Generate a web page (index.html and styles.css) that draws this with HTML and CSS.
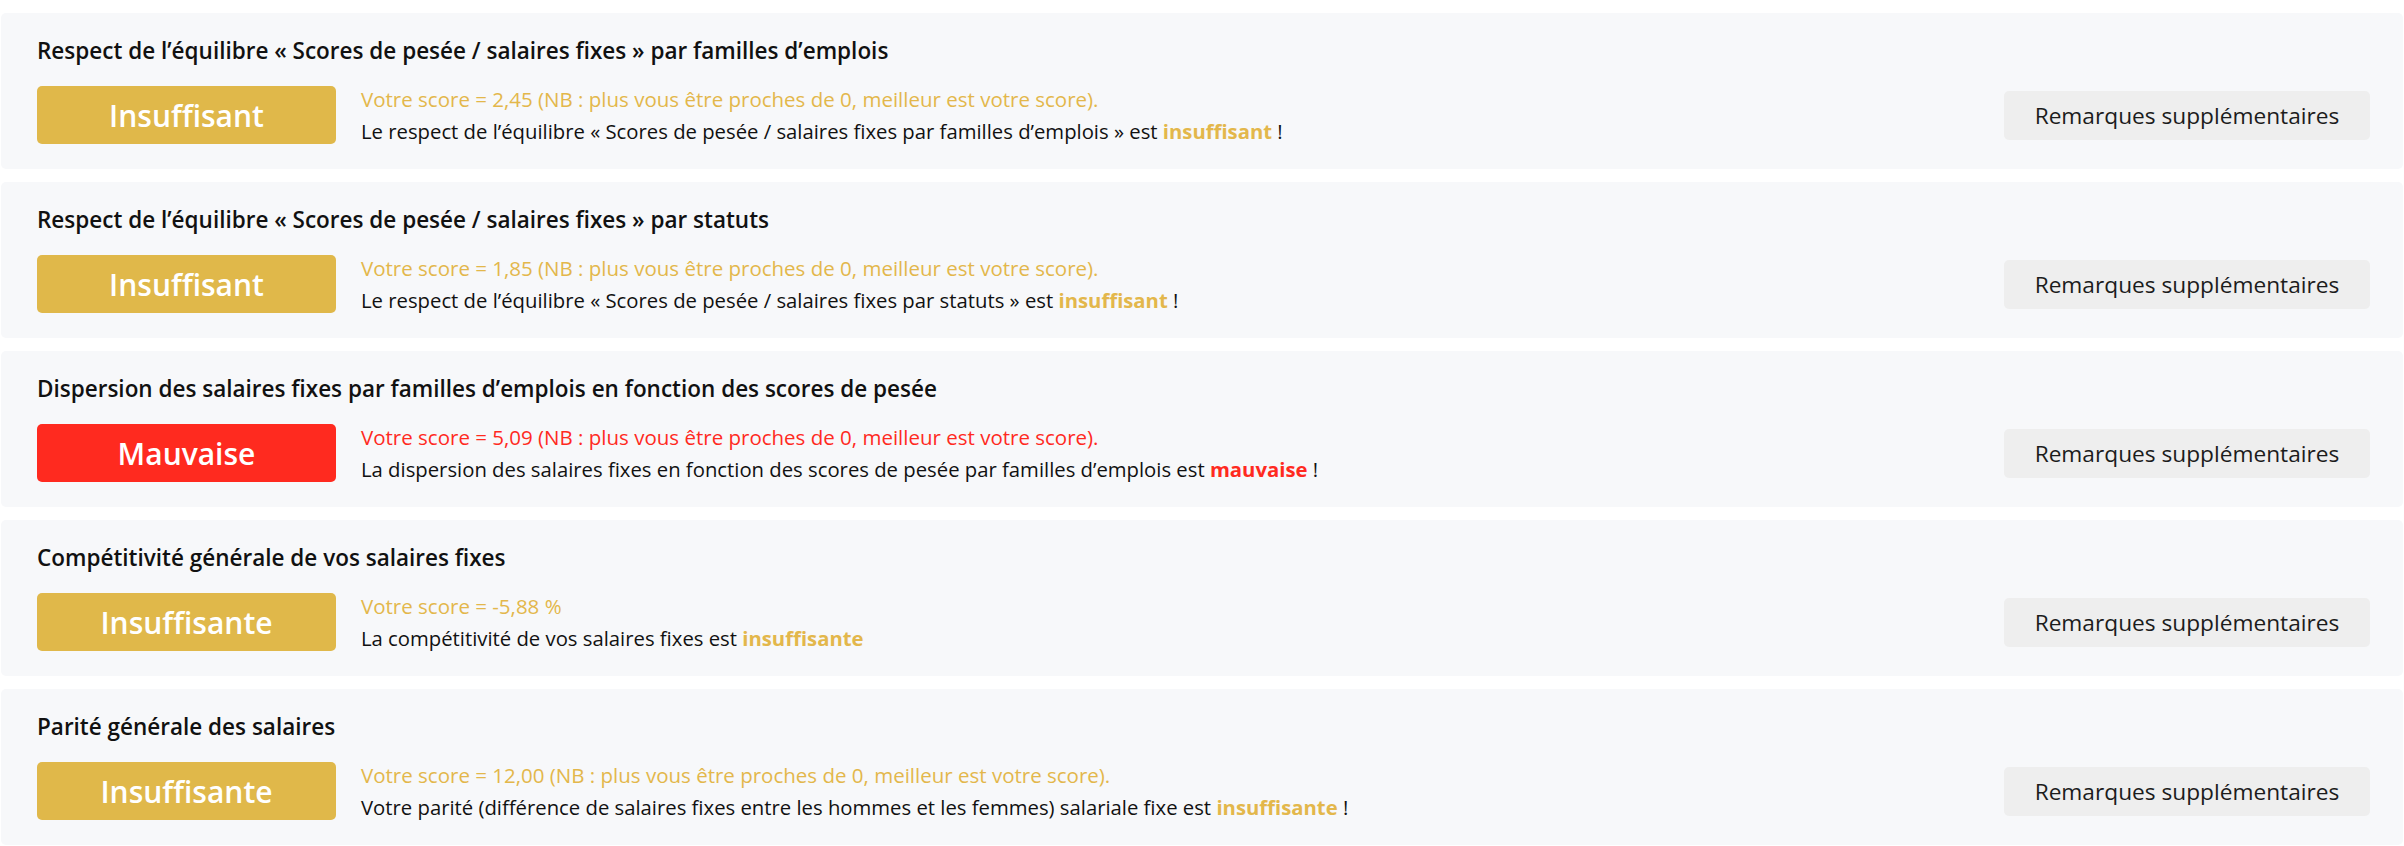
FILE: index.html
```html
<!DOCTYPE html>
<html lang="fr">
<head>
    <meta charset="UTF-8">
    <meta name="viewport" content="width=device-width, initial-scale=1.0">
    <title>Résultats</title>
    <link rel="stylesheet" href="styles.css">
</head>
<body>
    <div class="results">
        <div class="card">
            <div class="card-title">Respect de l’équilibre « Scores de pesée / salaires fixes » par familles d’emplois</div>
            <div class="card-row">
                <div class="badge warn">Insuffisant</div>
                <div class="details">
                    <div class="score warn-text">Votre score = 2,45 (NB : plus vous être proches de 0, meilleur est votre score).</div>
                    <div class="desc">Le respect de l’équilibre « Scores de pesée / salaires fixes par familles d’emplois » est <b class="warn-text">insuffisant</b> !</div>
                </div>
                <button class="remarks">Remarques supplémentaires</button>
            </div>
        </div>

        <div class="card">
            <div class="card-title">Respect de l’équilibre « Scores de pesée / salaires fixes » par statuts</div>
            <div class="card-row">
                <div class="badge warn">Insuffisant</div>
                <div class="details">
                    <div class="score warn-text">Votre score = 1,85 (NB : plus vous être proches de 0, meilleur est votre score).</div>
                    <div class="desc">Le respect de l’équilibre « Scores de pesée / salaires fixes par statuts » est <b class="warn-text">insuffisant</b> !</div>
                </div>
                <button class="remarks">Remarques supplémentaires</button>
            </div>
        </div>

        <div class="card">
            <div class="card-title">Dispersion des salaires fixes par familles d’emplois en fonction des scores de pesée</div>
            <div class="card-row">
                <div class="badge bad">Mauvaise</div>
                <div class="details">
                    <div class="score bad-text">Votre score = 5,09 (NB : plus vous être proches de 0, meilleur est votre score).</div>
                    <div class="desc">La dispersion des salaires fixes en fonction des scores de pesée par familles d’emplois est <b class="bad-text">mauvaise</b> !</div>
                </div>
                <button class="remarks">Remarques supplémentaires</button>
            </div>
        </div>

        <div class="card">
            <div class="card-title">Compétitivité générale de vos salaires fixes</div>
            <div class="card-row">
                <div class="badge warn">Insuffisante</div>
                <div class="details">
                    <div class="score warn-text">Votre score = -5,88 %</div>
                    <div class="desc">La compétitivité de vos salaires fixes est <b class="warn-text">insuffisante</b></div>
                </div>
                <button class="remarks">Remarques supplémentaires</button>
            </div>
        </div>

        <div class="card">
            <div class="card-title">Parité générale des salaires</div>
            <div class="card-row">
                <div class="badge warn">Insuffisante</div>
                <div class="details">
                    <div class="score warn-text">Votre score = 12,00 (NB : plus vous être proches de 0, meilleur est votre score).</div>
                    <div class="desc">Votre parité (différence de salaires fixes entre les hommes et les femmes) salariale fixe est <b class="warn-text">insuffisante</b> !</div>
                </div>
                <button class="remarks">Remarques supplémentaires</button>
            </div>
        </div>
    </div>
</body>
</html>
```

FILE: styles.css
```css
body {
    margin: 0;
    background-color: #ffffff;
    font-family: "Open Sans", "Noto Sans", sans-serif;
    color: #111111;
}

.results {
    padding: 13px 1px 0 1px;
}

.card {
    background-color: #f7f8fa;
    border-radius: 5px;
    height: 156px;
    box-sizing: border-box;
    padding: 22px 33px 0 36px;
    margin-bottom: 13px;
}

.card-title {
    font-size: 22.5px;
    font-weight: 600;
    line-height: 32px;
    height: 32px;
}

.card-row {
    display: flex;
    align-items: center;
    margin-top: 16px;
}

.badge {
    width: 299px;
    height: 58px;
    border-radius: 5px;
    color: #ffffff;
    font-size: 30px;
    font-weight: 600;
    display: flex;
    align-items: center;
    justify-content: center;
    flex-shrink: 0;
}

.warn {
    background-color: #e0b84a;
}

.bad {
    background-color: #ff2a1f;
}

.details {
    margin-left: 25px;
}

.score {
    font-size: 20.5px;
    line-height: 32px;
}

.desc {
    font-size: 20.3px;
    line-height: 32px;
}

.desc b {
    font-weight: 700;
}

.warn-text {
    color: #e3b74b;
}

.bad-text {
    color: #ff2a1f;
}

.remarks {
    margin-left: auto;
    width: 366px;
    height: 49px;
    border: none;
    border-radius: 5px;
    background-color: #eeeeee;
    color: #1c1c1c;
    font-family: "Open Sans", "Noto Sans", sans-serif;
    font-size: 22.7px;
}
```
